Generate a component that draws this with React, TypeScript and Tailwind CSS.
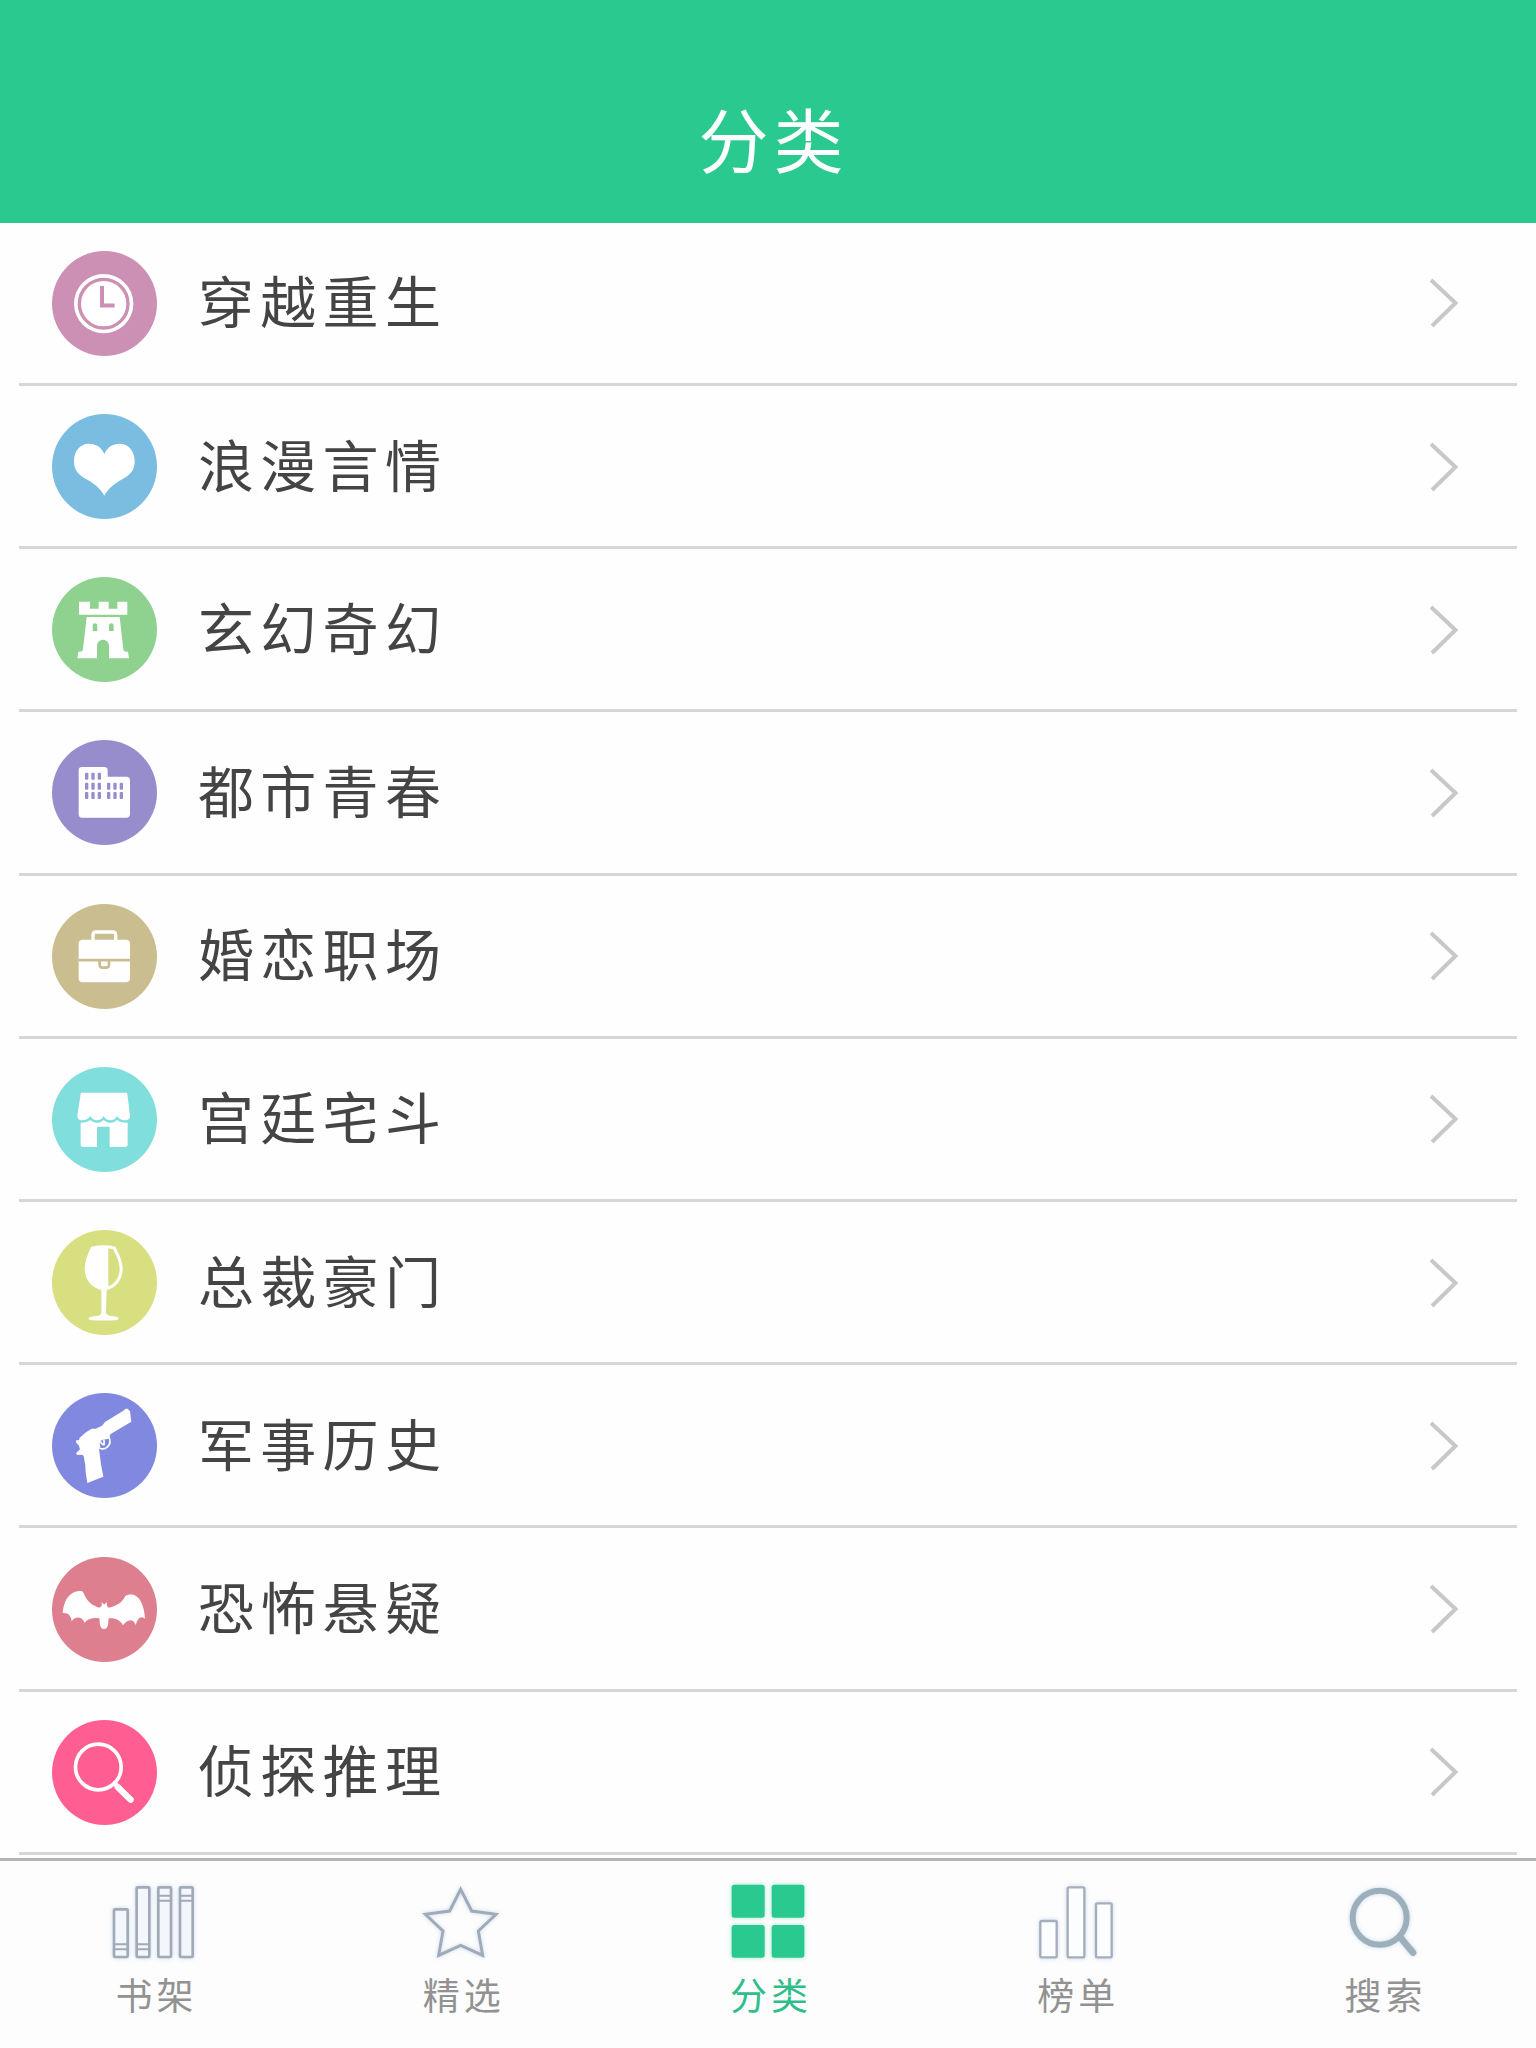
import type { ReactNode } from "react";

type Category = {
  label: string;
  color: string;
  icon: ReactNode;
};

const WINDOW_COLUMNS = [99, 118, 137, 165, 184, 203];
const WINDOW_ROWS = [98, 128, 156];

const CATEGORIES: Category[] = [
  {
    label: "穿越重生",
    color: "text-[#cb90b4]",
    icon: (
      <>
        <circle cx="155" cy="158" r="89" />
        <circle cx="155" cy="158" r="73" fill="none" stroke="currentColor" strokeWidth="10" />
        <path d="M150 105V163.500H188" fill="none" stroke="currentColor" strokeWidth="12" />
      </>
    ),
  },
  {
    label: "浪漫言情",
    color: "text-[#7bbde0]",
    icon: (
      <path d="M157 121C149 99 131 89 112 89C84 89 66 111 66 141C66 170 80 183 106 197C131 211 148 227 157 245C166 227 183 211 208 197C234 183 248 170 248 141C248 111 230 89 202 89C183 89 165 99 157 121Z" />
    ),
  },
  {
    label: "玄幻奇幻",
    color: "text-[#8fd18f]",
    icon: (
      <>
        <path d="M81 74H114V95H140V74H170V95H196V74H226V113H81Z" />
        <path d="M104 120H203L214 216Q215 224 223 224H228L231 244H171V206A18 18 0 0 0 135 206V244H76L79 224H84Q92 224 93 216Z" />
        <path
          d="M122 162V146A7 7 0 0 1 136 146V162ZM171 162V146A7 7 0 0 1 185 146V162Z"
          fill="currentColor"
        />
      </>
    ),
  },
  {
    label: "都市青春",
    color: "text-[#978dcd]",
    icon: (
      <>
        <path d="M90 81H157Q167 81 167 91V110H223Q234 110 234 121V222Q234 233 223 233H90Q80 233 80 222V91Q80 81 90 81Z" />
        {WINDOW_ROWS.map((y, row) =>
          WINDOW_COLUMNS.filter((_, col) => row > 0 || col < 3).map((x) => (
            <rect key={`${x}-${y}`} x={x} y={y} width="10" height="21" rx="3" fill="currentColor" />
          ))
        )}
      </>
    ),
  },
  {
    label: "婚恋职场",
    color: "text-[#cabd8f]",
    icon: (
      <>
        <rect x="80" y="107" width="154" height="128" rx="12" />
        <path
          d="M123 110V93Q123 84 132 84H182Q191 84 191 93V110"
          fill="none"
          stroke="white"
          strokeWidth="10"
        />
        <path
          d="M80 168.500H234M143 169V182Q143 191 152 191H162Q171 191 171 182V169"
          fill="none"
          stroke="currentColor"
          strokeWidth="8"
        />
      </>
    ),
  },
  {
    label: "宫廷宅斗",
    color: "text-[#80dfdc]",
    icon: (
      <>
        <path d="M86 81Q86 77 90 77H222Q226 77 226 81L234 146Q234 159 221 160Q205 161 195 147Q188 160 175 160Q162 160 155 147Q148 160 135 160Q122 160 115 147Q105 161 89 160Q76 159 76 146Z" />
        <path d="M86 167Q104 168 115 159Q124 168 135 168Q147 168 155 159Q164 168 175 168Q187 168 195 159Q206 168 227 167V232Q227 240 219 240H173V179H135V240H94Q86 240 86 232Z" />
      </>
    ),
  },
  {
    label: "总裁豪门",
    color: "text-[#d8df80]",
    icon: (
      <>
        <path d="M118 50Q155 42 190 50Q212 90 212 118C211 150 192 174 164 180L162 248Q163 257 180 258L196 261Q204 266 196 270Q155 273 114 270Q106 266 114 261L132 258Q147 257 148 248V180C119 173 99 150 98 118Q98 88 118 50Z" />
        <path d="M169 55L183 58Q203 92 203 119C202 142 189 161 169 169Z" fill="currentColor" />
      </>
    ),
  },
  {
    label: "军事历史",
    color: "text-[#8088e0]",
    icon: (
      <>
        <path d="M159 87L214 53L220 47L227 47L234 55L238 86L176 123L170 137L149 141L143 150L145 163L141 168L147 214L154 251L106 270L101 238L100 217L95 190L91 185L76 186L72 181L84 169L80 157L73 150L72 142L81 142L83 134L102 118L119 107L131 107L150 98Z" />
        <path
          d="M170 130Q180 150 166 162Q157 171 142 166"
          fill="none"
          stroke="white"
          strokeWidth="5"
        />
        <path
          d="M146 146Q148 155 156 155Q158 148 155 140"
          fill="none"
          stroke="white"
          strokeWidth="5"
        />
      </>
    ),
  },
  {
    label: "恐怖悬疑",
    color: "text-[#dd7f8f]",
    icon: (
      <path d="M32 168C35 132 50 106 80 102L90 102L95 108C103 131 120 146 142 152L149 147L149 135L155 142L158 142L164 135L165 147L170 152C195 147 212 135 220 117C238 108 254 113 264 129C273 144 278 163 279 185Q268 178 262 183Q255 190 251 204Q246 191 236 190Q222 192 213 205Q203 187 182 184L170 184L168 204Q165 216 156 216Q147 216 144 204L142 184Q112 180 98 197Q90 179 73 182Q63 184 59 193Q56 165 32 168Z" />
    ),
  },
  {
    label: "侦探推理",
    color: "text-[#ff5e93]",
    icon: (
      <g fill="none" stroke="white" strokeLinecap="round">
        <circle cx="139" cy="141" r="68.500" strokeWidth="11" />
        <path d="M188 190L200 202" strokeWidth="14" />
        <path d="M197 201L236 239" strokeWidth="19" />
      </g>
    ),
  },
];

const TABS = [
  {
    label: "书架",
    icon: (
      <g fill="#f3f6fa" stroke="#a0abb7" strokeWidth="8">
        <rect x="15" y="88" width="41" height="143" rx="3" />
        <rect x="83" y="22" width="38" height="209" rx="3" />
        <rect x="148" y="22" width="38" height="209" rx="3" />
        <rect x="213" y="22" width="38" height="209" rx="3" />
        <path d="M15 193H56M15 208H56M83 193H121M83 208H121M148 47H186M148 62H186M213 47H251M213 62H251" strokeWidth="6" />
      </g>
    ),
  },
  {
    label: "精选",
    icon: (
      <path
        d="M134 28L167 93L240 103L187 153L200 226L134 196L68 226L81 153L28 103L101 93Z"
        fill="none"
        stroke="#a0abb7"
        strokeWidth="9"
      />
    ),
  },
  {
    label: "分类",
    active: true,
    icon: (
      <g fill="#2ac98f">
        <rect x="26" y="14" width="99" height="99" rx="8" />
        <rect x="146" y="14" width="98" height="99" rx="8" />
        <rect x="26" y="135" width="99" height="98" rx="8" />
        <rect x="146" y="135" width="98" height="98" rx="8" />
      </g>
    ),
  },
  {
    label: "榜单",
    icon: (
      <g fill="#fcfdfe" stroke="#a5aeba" strokeWidth="7">
        <rect x="31" y="123" width="49" height="109" rx="4" />
        <rect x="113" y="22" width="50" height="210" rx="4" />
        <rect x="198" y="70" width="47" height="162" rx="4" />
      </g>
    ),
  },
  {
    label: "搜索",
    icon: (
      <g fill="none" stroke="#9eafbc" strokeLinecap="round">
        <circle cx="128" cy="113" r="81" strokeWidth="18" />
        <path d="M190 172L228 218" strokeWidth="20" />
      </g>
    ),
  },
];

function CategoryRow({ label, color, icon }: Category) {
  return (
    <li className="flex h-[163.220px] flex-col">
      <div className="flex flex-1 items-center pt-px pr-[77px] pl-[52px]">
        <svg viewBox="0 0 315 315" className={`size-[105px] shrink-0 ${color}`}>
          <circle cx="157.500" cy="157.500" r="157.500" fill="currentColor" />
          <g fill="white">{icon}</g>
        </svg>
        <span className="mb-[8px] ml-[41px] flex-1 text-[56px] leading-[80px] tracking-[6.300px] text-[#444]">
          {label}
        </span>
        <svg viewBox="0 0 30 50" className="h-[50px] w-[30px]" fill="none" stroke="#c8c8c8" strokeWidth="4">
          <path d="M2 2L26.500 25L3 48" />
        </svg>
      </div>
      <div className="mx-[19px] h-[3px] shrink-0 bg-[#d6d6d6]" />
    </li>
  );
}

export default function App() {
  return (
    <div className="flex h-[2048px] w-[1536px] flex-col overflow-hidden bg-[#fefefe] font-['Noto_Sans_CJK_SC',sans-serif]">
      <header className="flex h-[222.700px] shrink-0 items-end justify-center bg-[#2ac98f] pb-[33px] pl-[11px]">
        <h1 className="text-[70px] leading-[104px] tracking-[5px] text-white">分类</h1>
      </header>

      <ul className="h-[1635.300px] shrink-0">
        {CATEGORIES.map((category) => (
          <CategoryRow key={category.label} {...category} />
        ))}
      </ul>

      <nav className="grid flex-1 grid-cols-5 border-t-[3px] border-[#b4b4b4] bg-[#fdfdfd]">
        {TABS.map(({ label, icon, active }) => (
          <div key={label} className="flex flex-col items-center pt-[19px]">
            <svg
              viewBox="0 0 270 240"
              className={`h-[80px] w-[90px] ${
                active
                  ? "drop-shadow-[0_0_2px_rgba(42,201,143,0.45)]"
                  : "drop-shadow-[0_0_2px_rgba(150,185,225,0.5)]"
              }`}
            >
              {icon}
            </svg>
            <span
              className={`mt-[9px] pl-[6px] text-[37px] leading-[50px] tracking-[4px] ${
                active ? "text-[#2fbd8b]" : "text-[#929292]"
              }`}
            >
              {label}
            </span>
          </div>
        ))}
      </nav>
    </div>
  );
}
